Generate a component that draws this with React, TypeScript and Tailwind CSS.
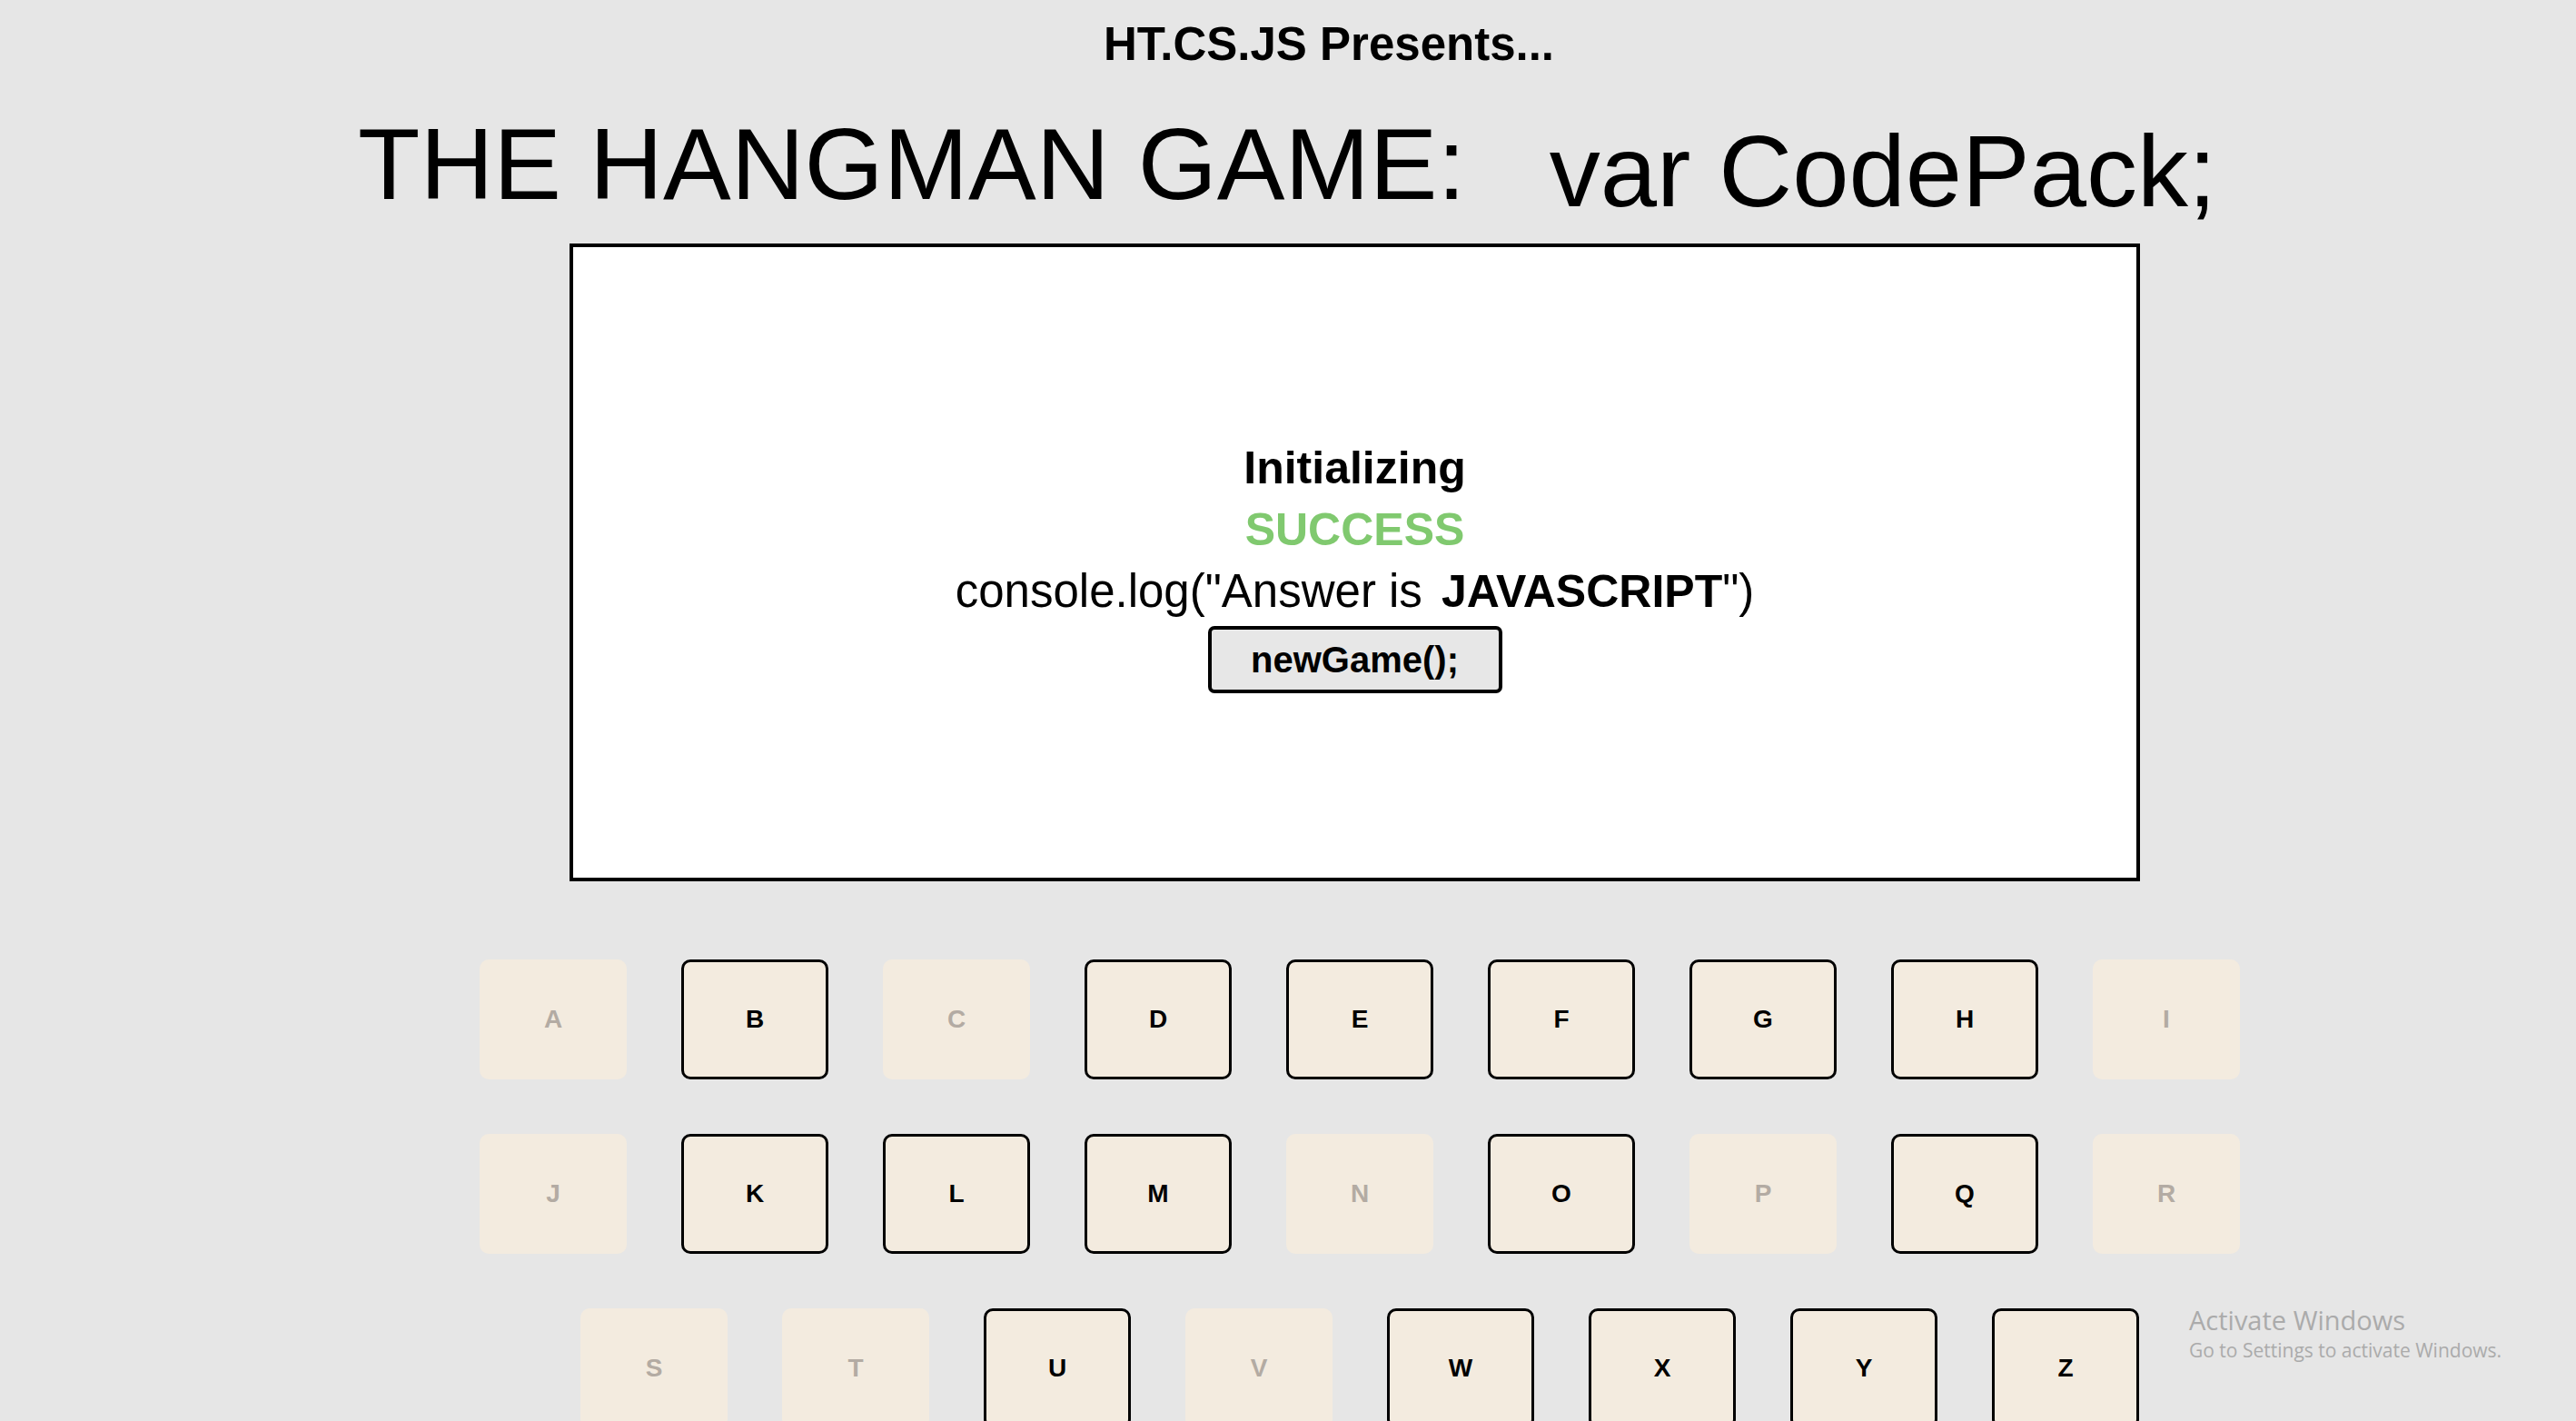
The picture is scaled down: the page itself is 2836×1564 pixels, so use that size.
const rows = [
  ["A", "B", "C", "D", "E", "F", "G", "H", "I"],
  ["J", "K", "L", "M", "N", "O", "P", "Q", "R"],
  ["S", "T", "U", "V", "W", "X", "Y", "Z"],
];

// letters already guessed are greyed out
const used = new Set(["A", "C", "I", "J", "N", "P", "R", "S", "T", "V"]);

function Key({ letter }: { letter: string }) {
  const off = used.has(letter);
  return (
    <button
      className={
        off
          ? "w-[162px] h-[132px] shrink-0 rounded-[10px] bg-[#f3ebdf] text-[#b3aba3] text-[28px] font-bold flex items-center justify-center"
          : "w-[162px] h-[132px] shrink-0 rounded-[10px] bg-[#f3ebdf] border-[3px] border-black text-black text-[28px] font-bold flex items-center justify-center"
      }
    >
      {letter}
    </button>
  );
}

export default function App() {
  return (
    <div className="relative h-[1564px] overflow-hidden bg-[#e6e6e6] font-['Liberation_Sans',Arial,sans-serif] text-black">
      <p className="pt-[23px] pl-[90px] text-center text-[51px] leading-none font-bold">
        HT.CS.JS Presents...
      </p>

      <h1 className="mt-[51px] pl-[394px] flex items-start text-[112px] leading-none font-normal whitespace-nowrap">
        <span>THE HANGMAN GAME:</span>
        <span className="ml-[92px] mt-[8px]">var CodePack;</span>
      </h1>

      <div className="mt-[23px] pl-[147px] flex justify-center">
        <div className="w-[1729px] h-[702px] bg-white border-4 border-black flex flex-col items-center justify-center pt-[6px]">
          <p className="text-[50px] leading-[68px] font-bold">Initializing</p>
          <p className="text-[50px] leading-[68px] font-bold text-[#80c96f]">SUCCESS</p>
          <p className="text-[51px] leading-[68px] whitespace-nowrap">
            console.log("Answer is<b className="ml-[21px] text-[50px]">JAVASCRIPT</b>")
          </p>
          <button className="mt-[4px] w-[324px] h-[74px] rounded-[7px] border-4 border-black bg-[#e7e7e7] text-[40px] font-bold flex items-center justify-center">
            newGame();
          </button>
        </div>
      </div>

      <div className="mt-[86px] pl-[158px] flex flex-col items-center gap-[60px]">
        {rows.map((row, i) => (
          <div key={i} className="flex gap-[60px]">
            {row.map((l) => (
              <Key key={l} letter={l} />
            ))}
          </div>
        ))}
      </div>

      <div className="absolute left-[2410px] top-[1433px] font-['Open_Sans',sans-serif] text-[#ababab]">
        <p className="text-[29px] leading-[39px]">Activate Windows</p>
        <p className="text-[21px] leading-[28px]">Go to Settings to activate Windows.</p>
      </div>
    </div>
  );
}
